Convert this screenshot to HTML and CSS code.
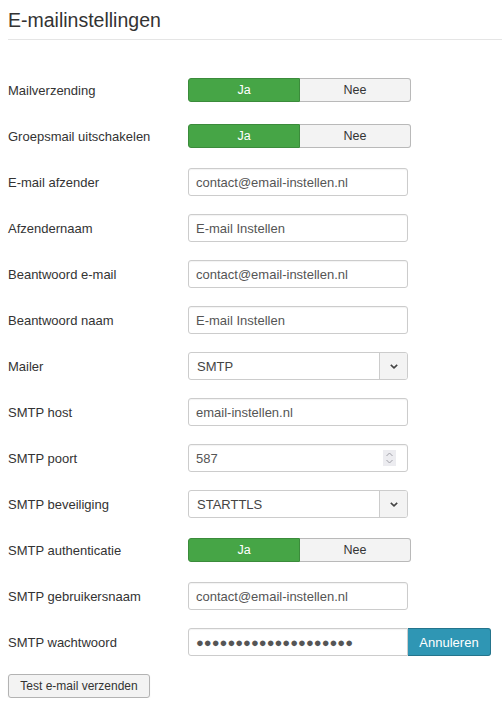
FILE: index.html
```html
<!DOCTYPE html>
<html lang="nl">
<head>
<meta charset="utf-8">
<title>E-mailinstellingen</title>
<link rel="stylesheet" href="styles.css">
</head>
<body>
<div class="page">
  <h2 class="title">E-mailinstellingen</h2>
  <form class="form">
    <div class="row"><label class="label">Mailverzending</label>
      <div class="toggle"><span class="opt opt-on">Ja</span><span class="opt">Nee</span></div></div>
    <div class="row"><label class="label">Groepsmail uitschakelen</label>
      <div class="toggle"><span class="opt opt-on">Ja</span><span class="opt">Nee</span></div></div>
    <div class="row"><label class="label">E-mail afzender</label>
      <input class="field" type="text" value="contact@email-instellen.nl"></div>
    <div class="row"><label class="label">Afzendernaam</label>
      <input class="field" type="text" value="E-mail Instellen"></div>
    <div class="row"><label class="label">Beantwoord e-mail</label>
      <input class="field" type="text" value="contact@email-instellen.nl"></div>
    <div class="row"><label class="label">Beantwoord naam</label>
      <input class="field" type="text" value="E-mail Instellen"></div>
    <div class="row"><label class="label">Mailer</label>
      <div class="select"><span class="select-text">SMTP</span><span class="select-arrow"><svg width="8" height="5" viewBox="0 0 8 5"><path d="M0.8 0.8 L4 3.8 L7.2 0.8" fill="none" stroke="#444" stroke-width="1.6"/></svg></span></div></div>
    <div class="row"><label class="label">SMTP host</label>
      <input class="field" type="text" value="email-instellen.nl"></div>
    <div class="row"><label class="label">SMTP poort</label>
      <div class="field number"><span>587</span><span class="spin"><svg width="13" height="16" viewBox="0 0 13 16"><path d="M3.5 6 L6.5 3 L9.5 6 M3.5 10 L6.5 13 L9.5 10" fill="none" stroke="#a0a0a8" stroke-width="1"/></svg></span></div></div>
    <div class="row"><label class="label">SMTP beveiliging</label>
      <div class="select"><span class="select-text">STARTTLS</span><span class="select-arrow"><svg width="8" height="5" viewBox="0 0 8 5"><path d="M0.8 0.8 L4 3.8 L7.2 0.8" fill="none" stroke="#444" stroke-width="1.6"/></svg></span></div></div>
    <div class="row"><label class="label">SMTP authenticatie</label>
      <div class="toggle"><span class="opt opt-on">Ja</span><span class="opt">Nee</span></div></div>
    <div class="row"><label class="label">SMTP gebruikersnaam</label>
      <input class="field" type="text" value="contact@email-instellen.nl"></div>
    <div class="row"><label class="label">SMTP wachtwoord</label>
      <div class="group"><input class="field field-joined dots" type="text" value="●●●●●●●●●●●●●●●●●●●●"><span class="btn-info">Annuleren</span></div></div>
  </form>
  <button class="btn-test" type="button">Test e-mail verzenden</button>
</div>
</body>
</html>
```
FILE: styles.css
```css
html, body {
  margin: 0;
  padding: 0;
  background: #fff;
}
body {
  font-family: "Liberation Sans", Arial, Helvetica, sans-serif;
  font-size: 13px;
  color: #333;
}
.page {
  padding: 8px 0 0 8px;
}
.title {
  margin: 0 0 36px 0;
  font-size: 19.5px;
  font-weight: normal;
  line-height: 24px;
  color: #333;
  padding-bottom: 7px;
  border-bottom: 1px solid #e5e5e5;
}
.form {
  margin: 0;
}
.row {
  display: flex;
  align-items: center;
  height: 28px;
  margin-bottom: 18px;
}
.label {
  width: 180px;
  flex: none;
  color: #333;
  line-height: 18px;
  padding-top: 1px;
}
.toggle {
  display: flex;
  width: 223px;
  height: 24px;
  box-sizing: border-box;
  font-size: 12.5px;
}
.opt {
  flex: 1;
  display: flex;
  align-items: center;
  justify-content: center;
  box-sizing: border-box;
  background: #f3f3f3;
  border: 1px solid #b9b9b9;
  border-left: none;
  border-radius: 0 3px 3px 0;
  color: #333;
}
.opt-on {
  background: #46a546;
  border: 1px solid #3b8b3b;
  border-radius: 3px 0 0 3px;
  color: #fff;
  flex: 0 0 112px;
}
.field {
  box-sizing: border-box;
  width: 220px;
  height: 28px;
  margin: 0;
  padding: 4px 7px;
  border: 1px solid #ccc;
  border-radius: 3px;
  font-family: "Liberation Sans", Arial, Helvetica, sans-serif;
  font-size: 13px;
  color: #555;
  background: #fff;
  box-shadow: inset 0 1px 1px rgba(0, 0, 0, 0.05);
  outline: none;
}
.dots {
  color: #555;
  letter-spacing: 0;
}
.number {
  display: flex;
  align-items: center;
  justify-content: space-between;
  padding-right: 11px;
}
.spin {
  display: flex;
  width: 13px;
  height: 16px;
  background: #ececf0;
}
.select {
  display: flex;
  box-sizing: border-box;
  width: 220px;
  height: 28px;
  border: 1px solid #ccc;
  border-radius: 3px;
  background: #fff;
  overflow: hidden;
}
.select-text {
  flex: 1;
  display: flex;
  align-items: center;
  padding-left: 8px;
  color: #444;
}
.select-arrow {
  width: 27px;
  display: flex;
  align-items: center;
  justify-content: center;
  border-left: 1px solid #ccc;
  background: #f3f3f3;
}
.group {
  display: flex;
}
.field-joined {
  border-radius: 3px 0 0 3px;
}
.btn-info {
  box-sizing: border-box;
  width: 83px;
  height: 28px;
  display: flex;
  align-items: center;
  justify-content: center;
  background: #2f96b4;
  border: 1px solid #24748c;
  border-left: none;
  border-radius: 0 3px 3px 0;
  color: #fff;
}
.btn-test {
  display: block;
  box-sizing: border-box;
  width: 142px;
  height: 24px;
  margin: 0;
  padding: 0;
  font-family: "Liberation Sans", Arial, Helvetica, sans-serif;
  font-size: 12px;
  color: #333;
  background: #f3f3f3;
  border: 1px solid #b3b3b3;
  border-radius: 3px;
  box-shadow: 0 1px 2px rgba(0, 0, 0, 0.05);
}
```
